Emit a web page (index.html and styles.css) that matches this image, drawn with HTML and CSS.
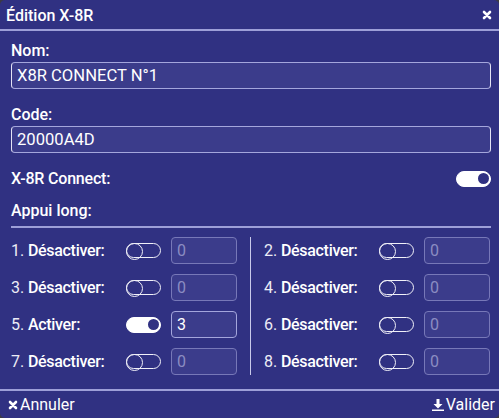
FILE: index.html
```html
<!DOCTYPE html>
<html lang="fr">
<head>
    <meta charset="UTF-8">
    <title>Édition X-8R</title>
    <link rel="stylesheet" href="styles.css">
</head>
<body>

<div class="dialog">
    <div class="dialog-head">
        <span class="title">Édition X-8R</span>
        <button class="close-btn" title="Fermer">
            <svg width="10" height="10" viewBox="0 0 10 10"><path d="M2 2L8 8M8 2L2 8" stroke="#fff" stroke-width="2.6" stroke-linecap="round"/></svg>
        </button>
    </div>

    <div class="dialog-body">
        <div class="field">
            <label for="nom">Nom:</label>
            <input type="text" class="text-input" id="nom" value="X8R CONNECT N°1">
        </div>
        <div class="field">
            <label for="code">Code:</label>
            <input type="text" class="text-input" id="code" value="20000A4D">
        </div>

        <div class="switch-row">
            <span>X-8R Connect:</span>
            <span class="toggle on"></span>
        </div>

        <div class="section-title">Appui long:</div>

        <div class="press-grid">
            <div class="press-col">
                <div class="press-row">
                    <span class="press-label"><span class="num">1.</span> Désactiver:</span>
                    <span class="toggle"></span>
                    <input type="text" class="num-input" value="0" disabled>
                </div>
                <div class="press-row">
                    <span class="press-label"><span class="num">3.</span> Désactiver:</span>
                    <span class="toggle"></span>
                    <input type="text" class="num-input" value="0" disabled>
                </div>
                <div class="press-row">
                    <span class="press-label"><span class="num">5.</span> Activer:</span>
                    <span class="toggle on"></span>
                    <input type="text" class="num-input" value="3">
                </div>
                <div class="press-row">
                    <span class="press-label"><span class="num">7.</span> Désactiver:</span>
                    <span class="toggle"></span>
                    <input type="text" class="num-input" value="0" disabled>
                </div>
            </div>
            <div class="press-col right">
                <div class="press-row">
                    <span class="press-label"><span class="num">2.</span> Désactiver:</span>
                    <span class="toggle"></span>
                    <input type="text" class="num-input" value="0" disabled>
                </div>
                <div class="press-row">
                    <span class="press-label"><span class="num">4.</span> Désactiver:</span>
                    <span class="toggle"></span>
                    <input type="text" class="num-input" value="0" disabled>
                </div>
                <div class="press-row">
                    <span class="press-label"><span class="num">6.</span> Désactiver:</span>
                    <span class="toggle"></span>
                    <input type="text" class="num-input" value="0" disabled>
                </div>
                <div class="press-row">
                    <span class="press-label"><span class="num">8.</span> Désactiver:</span>
                    <span class="toggle"></span>
                    <input type="text" class="num-input" value="0" disabled>
                </div>
            </div>
        </div>
    </div>

    <div class="dialog-foot">
        <button class="foot-btn">
            <svg width="10" height="10" viewBox="0 0 10 10"><path d="M2 2L8 8M8 2L2 8" stroke="#fff" stroke-width="2.6" stroke-linecap="round"/></svg>
            Annuler
        </button>
        <button class="foot-btn">
            <svg width="12" height="12" viewBox="0 0 12 12"><path d="M4.5 0h3v5h3L6 9.5 1.5 5h3z M0 10.5h12V12H0z" fill="#fff"/></svg>
            Valider
        </button>
    </div>
</div>

</body>
</html>
```

FILE: styles.css
```css
* {
    box-sizing: border-box;
    margin: 0;
    padding: 0;
}

body {
    background: #3b3b45;
    font-family: 'Roboto', 'Liberation Sans', sans-serif;
    font-size: 16px;
    color: #fff;
}

.dialog {
    background: #303182;
    border-radius: 5px;
    width: 499px;
    height: 418px;
    display: flex;
    flex-direction: column;
}

.dialog-head {
    height: 31px;
    padding: 1px 6px 0 6px;
    display: flex;
    align-items: center;
    justify-content: space-between;
    border-bottom: 2px solid #9d9fd8;
}

.title {
    font-weight: 500;
}

.close-btn, .foot-btn {
    background: none;
    border: none;
    color: #fff;
    font-family: inherit;
    font-size: 16px;
    cursor: pointer;
    display: flex;
    align-items: center;
}

.close-btn {
    margin-right: 1px;
}

.dialog-body {
    padding: 10px 8px 14px 11px;
    flex: 1;
}

.field {
    margin-bottom: 16px;
}

.field label {
    display: block;
    line-height: 19px;
    font-weight: 500;
    margin-bottom: 2px;
}

.text-input, .num-input {
    height: 27px;
    background: #3b3c8b;
    border: 1px solid #a4a6dc;
    border-radius: 4px;
    color: #fff;
    font-family: inherit;
    font-size: 16px;
    padding: 0 5px;
    outline: none;
}

.text-input {
    width: 100%;
    font-size: 16.6px;
    border-left-color: #e4e4f4;
    border-right-color: #e4e4f4;
}

.switch-row {
    height: 19px;
    display: flex;
    align-items: center;
    justify-content: space-between;
    font-weight: 500;
    letter-spacing: -0.2px;
}

.section-title {
    margin-top: 13px;
    line-height: 19px;
    padding-bottom: 6px;
    border-bottom: 2px solid #9d9fd8;
    font-weight: 500;
}

.toggle {
    position: relative;
    width: 35px;
    height: 15px;
    border: 1.5px solid #f0f0f8;
    border-radius: 8px;
    flex-shrink: 0;
}

.toggle::before {
    content: "";
    position: absolute;
    left: -1.5px;
    top: -1.5px;
    width: 15px;
    height: 15px;
    border: 1.5px solid #f0f0f8;
    border-radius: 50%;
}

.toggle.on {
    height: 16px;
    background: #fff;
    border-color: #fff;
}

.toggle.on::before {
    left: auto;
    right: 1px;
    top: 1px;
    width: 11px;
    height: 11px;
    border: none;
    background: #303182;
}

.press-grid {
    margin-top: 9px;
    display: flex;
}

.press-col {
    display: flex;
    flex-direction: column;
    gap: 10px;
    width: 239px;
    padding-right: 13px;
}

.press-col.right {
    width: auto;
    flex: 1;
    padding-right: 0;
    padding-left: 13px;
    border-left: 1px solid #c8c9ea;
}

.press-row {
    display: flex;
    align-items: center;
    height: 27px;
}

.press-label {
    width: 115px;
    font-weight: 500;
    letter-spacing: -0.3px;
}

.press-label .num {
    font-weight: 400;
    letter-spacing: 0;
    color: #ececf6;
}

.num-input {
    width: 66px;
    margin-left: 10px;
}

.num-input:disabled {
    border-color: #7778b8;
    color: #8b8cc2;
}

.dialog-foot {
    height: 29px;
    border-top: 2px solid #9d9fd8;
    display: flex;
    align-items: center;
    justify-content: space-between;
    padding: 0 4px 0 8px;
}

.foot-btn svg {
    margin-right: 2px;
}
```
